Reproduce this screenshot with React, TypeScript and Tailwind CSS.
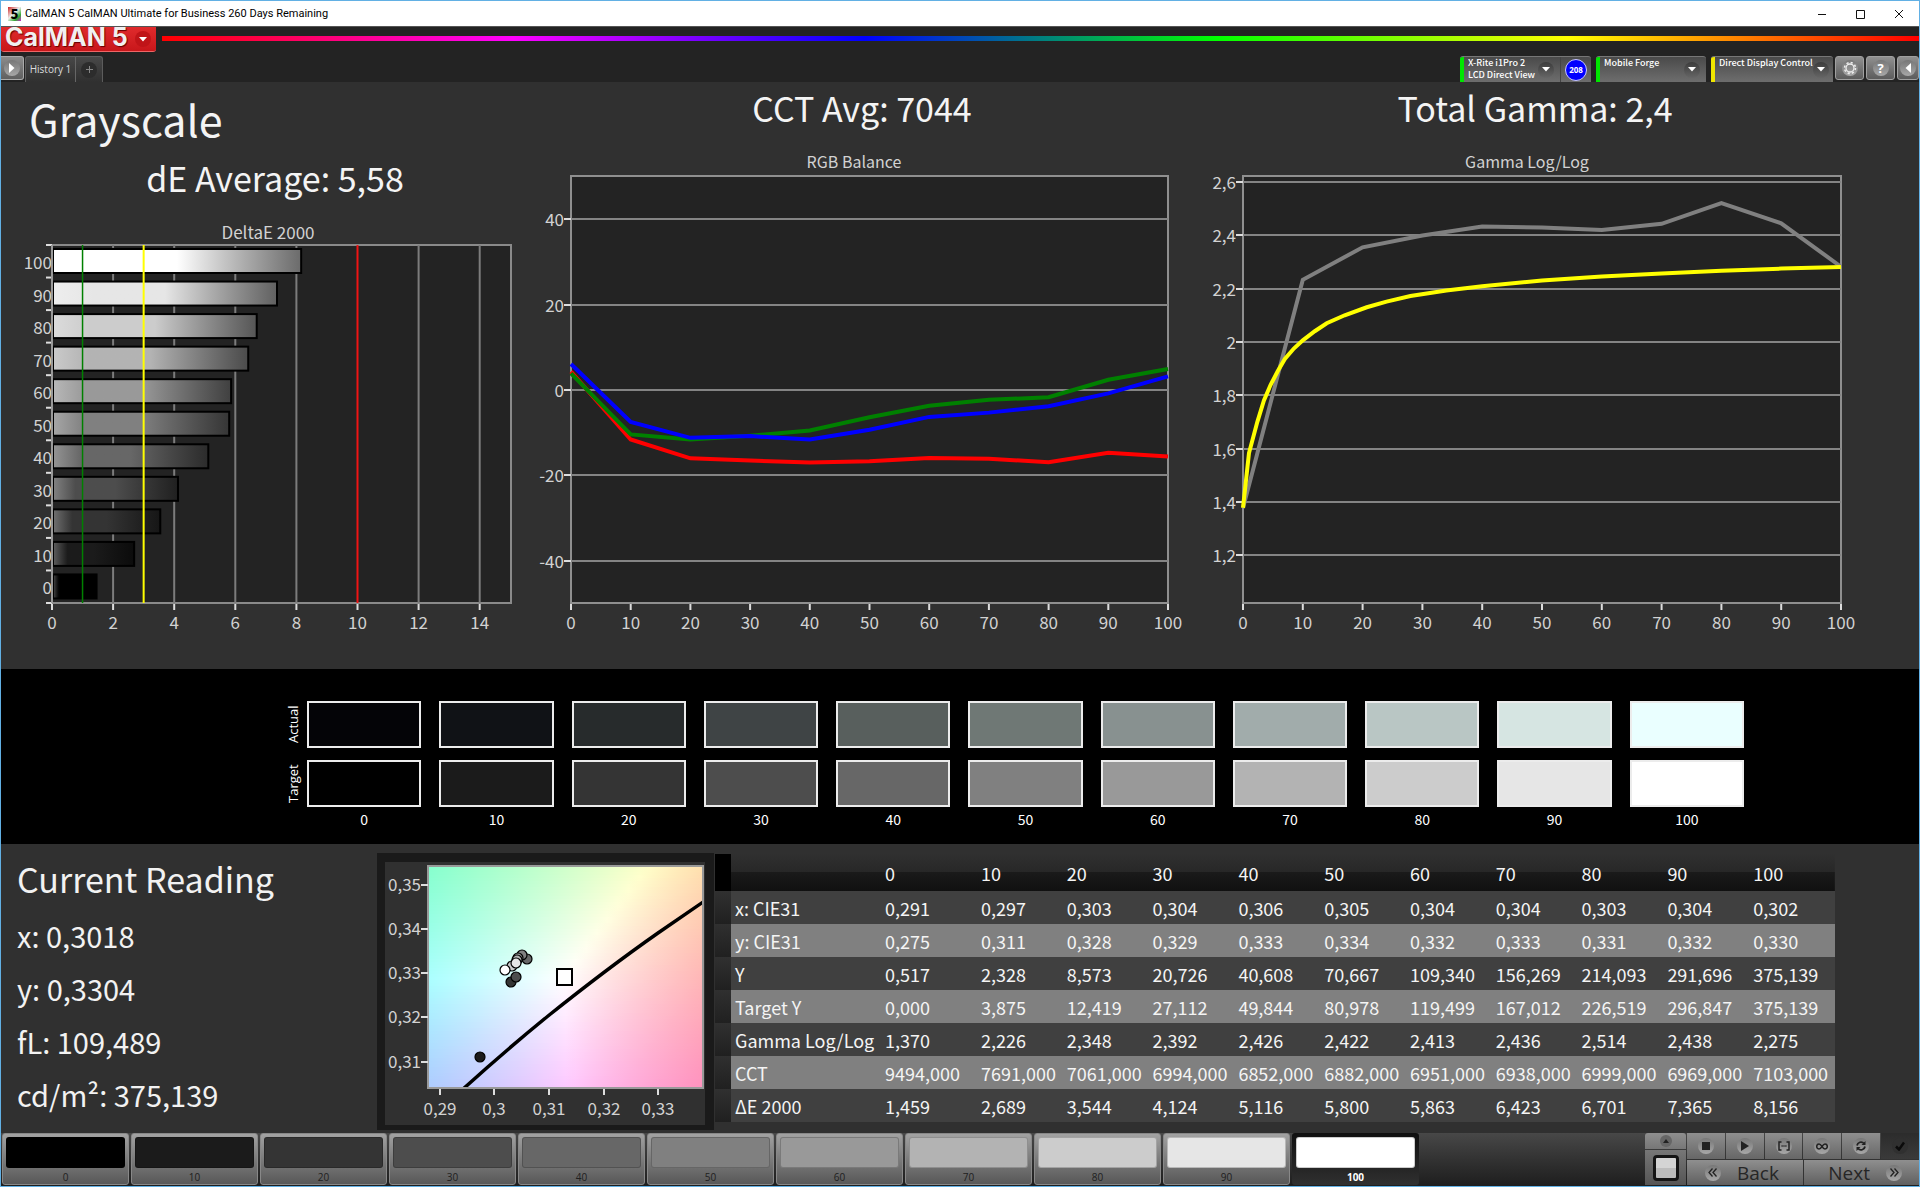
import type { ReactNode } from 'react'

// ── Measurement data ─────────────────────────────
const LEVELS = [0, 10, 20, 30, 40, 50, 60, 70, 80, 90, 100]

const TARGET = ['#000000', '#1b1b1b', '#343434', '#4d4d4d', '#676767', '#808080', '#999999', '#b3b3b3', '#cccccc', '#e6e6e6', '#ffffff']
const ACTUAL = ['#040407', '#101216', '#272b2c', '#3f4445', '#585f5d', '#6f7875', '#889190', '#a1acab', '#b9c6c4', '#d6e5e2', '#eaffff']

const DELTA_E = [1.459, 2.689, 3.544, 4.124, 5.116, 5.8, 5.863, 6.423, 6.701, 7.365, 8.156]

const RED = [4.3, -11.6, -16, -16.5, -17, -16.7, -15.9, -16.1, -16.9, -14.7, -15.6]
const GREEN = [3.9, -10.4, -11.6, -10.7, -9.5, -6.4, -3.7, -2.3, -1.7, 2.4, 4.9]
const BLUE = [6.1, -7.5, -11.2, -10.8, -11.6, -9.3, -6.3, -5.3, -3.8, -0.8, 3.2]

const GAMMA = [1.377, 2.233, 2.355, 2.399, 2.433, 2.429, 2.42, 2.443, 2.521, 2.445, 2.282]
const GAMMA_TARGET = [
  [0, 1.378], [1, 1.583], [2.4, 1.7], [3.5, 1.78], [4.6, 1.838], [5.8, 1.89], [7, 1.936], [8.5, 1.975], [10, 2.006],
  [12, 2.04], [14, 2.07], [17, 2.1], [20.7, 2.13], [24, 2.151], [28, 2.172], [34, 2.193], [40, 2.209],
  [50, 2.23], [60, 2.245], [70, 2.257], [80, 2.267], [90, 2.275], [100, 2.281],
]

const ROWS = [
  { label: 'x: CIE31', values: ['0,291', '0,297', '0,303', '0,304', '0,306', '0,305', '0,304', '0,304', '0,303', '0,304', '0,302'] },
  { label: 'y: CIE31', values: ['0,275', '0,311', '0,328', '0,329', '0,333', '0,334', '0,332', '0,333', '0,331', '0,332', '0,330'] },
  { label: 'Y', values: ['0,517', '2,328', '8,573', '20,726', '40,608', '70,667', '109,340', '156,269', '214,093', '291,696', '375,139'] },
  { label: 'Target Y', values: ['0,000', '3,875', '12,419', '27,112', '49,844', '80,978', '119,499', '167,012', '226,519', '296,847', '375,139'] },
  { label: 'Gamma Log/Log', values: ['1,370', '2,226', '2,348', '2,392', '2,426', '2,422', '2,413', '2,436', '2,514', '2,438', '2,275'] },
  { label: 'CCT', values: ['9494,000', '7691,000', '7061,000', '6994,000', '6852,000', '6882,000', '6951,000', '6938,000', '6999,000', '6969,000', '7103,000'] },
  { label: 'ΔE 2000', values: ['1,459', '2,689', '3,544', '4,124', '5,116', '5,800', '5,863', '6,423', '6,701', '7,365', '8,156'] },
]

const AXIS_TEXT = 'fill-[#d2d2d2] text-[17px]'

// ── Window title bar ─────────────────────────────
function TitleBar() {
  return (
    <header className="flex h-[25px] items-center bg-white text-black">
      <span className="ml-[7px] flex h-[14px] w-[13px] items-center justify-center bg-[linear-gradient(135deg,#c22,#eee_45%,#3a3_75%,#c2c)] text-[13px] leading-none font-black">
        5
      </span>
      <h1 className="ml-1 font-[Roboto,sans-serif] text-[11px] leading-4">CalMAN 5 CalMAN Ultimate for Business 260 Days Remaining</h1>
      <div className="ml-auto flex h-full">
        <button aria-label="Minimize" className="flex w-[38px] items-center justify-center">
          <svg width="10" height="10" stroke="#111"><path d="M1 5.5h8" /></svg>
        </button>
        <button aria-label="Maximize" className="flex w-[38px] items-center justify-center">
          <svg width="10" height="10" fill="none" stroke="#111"><path d="M1.500 1.500h8v8h-8z" /></svg>
        </button>
        <button aria-label="Close" className="flex w-[40px] items-center justify-center">
          <svg width="10" height="10" stroke="#111"><path d="M1 1l8 8M9 1l-8 8" /></svg>
        </button>
      </div>
    </header>
  )
}

function Knob({ dark, children }: { dark?: boolean; children: ReactNode }) {
  return (
    <span
      className={
        dark
          ? 'flex size-4 shrink-0 items-center justify-center rounded-full bg-gradient-to-b from-[#3c3c3c] to-[#666]'
          : 'flex size-4 shrink-0 items-center justify-center rounded-full bg-gradient-to-b from-[#777] to-[#a8a8a8]'
      }
    >
      {children}
    </span>
  )
}

function Caret() {
  return <svg width="8" height="5" fill="#fff"><path d="M0 0h8L4 4.500z" /></svg>
}

function DeviceTab({ stripe, width, lines, badge }: { stripe: string; width: string; lines: string[]; badge?: string }) {
  return (
    <div className={`flex h-[26px] overflow-hidden rounded-t-[3px] border-t border-[#777] bg-gradient-to-b from-[#4a4a4a] to-[#6e6e6e] ${width}`}>
      <span className={`w-1 shrink-0 ${stripe}`} />
      <button className="flex min-w-0 flex-1 items-center justify-between pr-[6px] pl-1 text-left">
        <span className="self-start font-['Noto_Sans_CJK_SC',sans-serif] text-[9px] leading-3 font-medium whitespace-nowrap text-white">
          {lines.map((line) => <span key={line} className="block">{line}</span>)}
        </span>
        <Knob dark><Caret /></Knob>
      </button>
      {badge && (
        <span className="flex w-[31px] shrink-0 items-center justify-center border-l border-[#444]">
          <span className="flex size-[22px] items-center justify-center rounded-full border border-[#c8c8ff] bg-[#0000ff] text-[8px] font-bold text-white">
            {badge}
          </span>
        </span>
      )}
    </div>
  )
}

const SQUARE_BUTTON = 'flex h-6 items-center justify-center rounded-[3px] border border-[#a0a0a0] bg-gradient-to-b from-[#909090] to-[#5c5c5c]'

function Toolbar() {
  return (
    <div className="border-t border-[#555] bg-[#232323] font-['Open_Sans',sans-serif]">
      <div className="flex h-[25px]">
        <button className="flex w-[155px] items-start rounded-b-[3px] border-b border-[#e66] bg-gradient-to-b from-[#e02a2c] to-[#c8161a] pl-1 text-left">
          <span className="font-[Inter,sans-serif] text-[25px] leading-5 font-bold whitespace-nowrap text-[#f0f0f0] [text-shadow:1px_1px_1px_#600]">CalMAN 5</span>
          <span className="mt-1 mr-[5px] ml-auto flex size-4 items-center justify-center rounded-full bg-[#c01418]"><Caret /></span>
        </button>
        <div className="mt-[9px] ml-[6px] h-[5px] flex-1 bg-[linear-gradient(90deg,#f00,#f0f_20%,#00f_40%,#0f0_60%,#ff0_80%,#f00)]" />
      </div>
      <div className="flex h-[30px] items-end">
        <button aria-label="Play" className="mb-[2px] flex h-6 w-[23px] items-center justify-center rounded-r-[3px] border border-l-0 border-[#aaa] bg-gradient-to-b from-[#8c8c8c] to-[#606060]">
          <Knob><svg width="6" height="10" fill="#fff"><path d="M0 0v10l5.500-5z" /></svg></Knob>
        </button>
        <div className="ml-px flex h-[26px] rounded-t-[3px] border border-b-0 border-[#5c5c5c] bg-gradient-to-b from-[#484848] to-[#303030]">
          <button className="w-[49px] text-[10px] text-[#ddd]">History 1</button>
          <button aria-label="Add tab" className="flex w-[27px] items-center justify-center border-l border-[#666]">
            <span className="flex size-4 items-center justify-center rounded-full bg-[#2c2c2c]">
              <svg width="7" height="7" stroke="#888"><path d="M3.500 0v7M0 3.500h7" /></svg>
            </span>
          </button>
        </div>
        <div className="ml-auto flex items-end">
          <DeviceTab stripe="bg-[#00e600]" width="w-[131px]" lines={['X-Rite i1Pro 2', 'LCD Direct View']} badge="208" />
          <div className="w-[5px]" />
          <DeviceTab stripe="bg-[#00e600]" width="w-[110px]" lines={['Mobile Forge']} />
          <div className="w-[5px]" />
          <DeviceTab stripe="bg-[#f0e600]" width="w-[122px]" lines={['Direct Display Control']} />
          <div className="mb-[2px] ml-[2px] flex gap-[2px]">
            <button aria-label="Settings" className={`w-[29px] ${SQUARE_BUTTON}`}>
              <Knob>
                <svg width="14" height="14" viewBox="-7 -7 14 14" fill="none" stroke="#eee">
                  <circle r="4" strokeWidth="1.300" />
                  <circle r="5.500" strokeWidth="1.500" strokeDasharray="2.160 2.160" />
                </svg>
              </Knob>
            </button>
            <button aria-label="Help" className={`w-[29px] ${SQUARE_BUTTON}`}>
              <Knob><span className="text-[13px] leading-none font-bold text-white">?</span></Knob>
            </button>
            <button aria-label="Collapse" className={`w-[22px] ${SQUARE_BUTTON}`}>
              <Knob><svg width="6" height="10" fill="#fff"><path d="M6 0v10L0.500 5z" /></svg></Knob>
            </button>
          </div>
        </div>
      </div>
    </div>
  )
}

// ── DeltaE bar chart ─────────────────────────────
function DeltaEChart() {
  const left = 52
  const top = 245
  const bottom = 603
  const unit = 30.55
  const step = (bottom - top) / 11
  const x = (v: number) => left + v * unit
  return (
    <svg viewBox="1 220 532 449" className="block w-full" role="img" aria-label="DeltaE 2000">
      <defs>
        {TARGET.map((c, i) => (
          <linearGradient key={i} id={`bar${i}`}>
            <stop offset="0" stopColor={`color-mix(in srgb, ${c} 70%, #fff)`} />
            <stop offset="0.180" stopColor={c} />
            <stop offset="0.500" stopColor={c} />
            <stop offset="1" stopColor={`color-mix(in srgb, ${c} 42%, #000)`} />
          </linearGradient>
        ))}
      </defs>
      <text x="268" y="239" textAnchor="middle" className={AXIS_TEXT}>DeltaE 2000</text>
      <rect x={left} y={top} width="459" height={bottom - top} fill="#232323" stroke="#8a8a8a" strokeWidth="2" />
      {[2, 4, 6, 8, 12, 14].map((v) => (
        <path key={v} d={`M${x(v)} ${top}V${bottom}`} stroke="#7c7c7c" strokeWidth="2" />
      ))}
      {[0, 2, 4, 6, 8, 10, 12, 14].map((v) => (
        <g key={v}>
          <path d={`M${x(v)} ${bottom + 1}v6`} stroke="#ddd" strokeWidth="2" />
          <text x={x(v)} y="629" textAnchor="middle" className={AXIS_TEXT}>{v}</text>
        </g>
      ))}
      {LEVELS.map((level, i) => {
        const y = top + step * (10 - i)
        return (
          <g key={level}>
            <path d={`M46 ${y}h6`} stroke="#ddd" strokeWidth="2" />
            <rect x={left + 1} y={y + 4} width={DELTA_E[i] * unit - 1} height="24" fill={`url(#bar${i})`} stroke="#000" strokeWidth="2" />
            <text x="52" y={y + 24} textAnchor="end" className={AXIS_TEXT}>{level}</text>
          </g>
        )
      })}
      <path d="M46 603h6" stroke="#ddd" strokeWidth="2" />
      <path d={`M${left} ${top}V${bottom}`} stroke="#999" strokeWidth="2" />
      <path d={`M${x(1)} ${top}V${bottom}`} stroke="#008000" strokeWidth="1.500" />
      <path d={`M${x(3)} ${top}V${bottom}`} stroke="#ffff00" strokeWidth="2" />
      <path d={`M${x(10)} ${top}V${bottom}`} stroke="#f01414" strokeWidth="2" />
    </svg>
  )
}

// ── Line charts share the same frame ─────────────
interface LineChartProps {
  title: string
  titleX: number
  viewBox: string
  left: number
  right: number
  ticks: { label: string; y: number }[]
  children: ReactNode
}

function LineChart({ title, titleX, viewBox, left, right, ticks, children }: LineChartProps) {
  return (
    <svg viewBox={viewBox} className="block w-full" role="img" aria-label={title}>
      <text x={titleX} y="168" textAnchor="middle" className="fill-[#d2d2d2] text-[16px]">{title}</text>
      <rect x={left} y="176" width={right - left} height="427" fill="#232323" stroke="#8f8f8f" strokeWidth="2" />
      {ticks.map(({ label, y }) => (
        <g key={label}>
          <path d={`M${left} ${y}H${right}`} stroke="#848484" strokeWidth="2" />
          <path d={`M${left - 7} ${y}h7`} stroke="#ddd" strokeWidth="2" />
          <text x={left - 7} y={y + 7} textAnchor="end" className={AXIS_TEXT}>{label}</text>
        </g>
      ))}
      {LEVELS.map((level) => {
        const x = left + ((right - left) * level) / 100
        return (
          <g key={level}>
            <path d={`M${x} 604v6`} stroke="#ddd" strokeWidth="2" />
            <text x={x} y="629" textAnchor="middle" className={AXIS_TEXT}>{level}</text>
          </g>
        )
      })}
      {children}
    </svg>
  )
}

function RgbBalance() {
  const points = (values: number[]) => values.map((v, i) => `${571 + i * 59.7},${390 - v * 4.27}`).join(' ')
  const ticks = [40, 20, 0, -20, -40].map((v) => ({ label: String(v), y: Math.round(390 - v * 4.27) }))
  return (
    <LineChart title="RGB Balance" titleX={854} viewBox="533 140 658 529" left={571} right={1168} ticks={ticks}>
      <g fill="none" strokeWidth="4">
        <polyline points={points(RED)} stroke="#ff0000" />
        <polyline points={points(GREEN)} stroke="#008000" />
        <polyline points={points(BLUE)} stroke="#0000ff" />
      </g>
    </LineChart>
  )
}

function GammaChart() {
  const px = (level: number, v: number) => `${1243 + level * 5.98},${182 + (2.6 - v) * 266.5}`
  const ticks = ['2,6', '2,4', '2,2', '2', '1,8', '1,6', '1,4', '1,2'].map((label, i) => ({ label, y: Math.round(182 + i * 53.3) }))
  return (
    <LineChart title="Gamma Log/Log" titleX={1527} viewBox="1191 140 728 529" left={1243} right={1841} ticks={ticks}>
      <g fill="none" strokeWidth="4">
        <polyline points={GAMMA.map((v, i) => px(i * 10, v)).join(' ')} stroke="#808080" />
        <polyline points={GAMMA_TARGET.map(([level, v]) => px(level, v)).join(' ')} stroke="#ffff00" />
      </g>
    </LineChart>
  )
}

// ── Chromaticity diagram ─────────────────────────
const CIE_LEFT = 429
const CIE_WIDTH = 273
const cieX = (x: number) => 439.5 + (x - 0.29) * 5470
const cieY = (y: number) => 884.5 + (0.35 - y) * 4430

// xy → linear sRGB, scaled so the brightest channel is full
function xyToColor(px: number, py: number) {
  const x = 0.29 + (px - 439.5) / 5470
  const y = 0.35 - (py - 884.5) / 4430
  const X = x / y
  const Z = (1 - x - y) / y
  const rgb = [3.2406 * X - 1.5372 - 0.4986 * Z, -0.9689 * X + 1.8758 + 0.0415 * Z, 0.0557 * X - 0.204 + 1.057 * Z]
  const max = Math.max(...rgb)
  return `rgb(${rgb.map((c) => Math.round((c / max) * 255)).join(',')})`
}

const CIE_BANDS = Array.from({ length: 74 }, (_, i) => 866 + i * 3)
const CIE_STOPS = Array.from({ length: 27 }, (_, i) => i / 26)

const DOTS: [number, number, string][] = [
  [480, 1057, '#1b1b1b'], [511, 982, '#343434'], [516, 977, '#4d4d4d'], [527, 959, '#676767'], [522, 955, '#808080'],
  [518, 958, '#999999'], [517, 960, '#b3b3b3'], [512, 966, '#cccccc'], [516, 963, '#e6e6e6'], [505, 970, '#ffffff'],
]

function CieChart() {
  return (
    <svg viewBox="377 853 337 277" className="block w-full" role="img" aria-label="CIE chromaticity">
      <defs>
        {CIE_BANDS.map((y) => (
          <linearGradient key={y} id={`cie${y}`}>
            {CIE_STOPS.map((s) => <stop key={s} offset={s} stopColor={xyToColor(CIE_LEFT + s * CIE_WIDTH, y + 1.5)} />)}
          </linearGradient>
        ))}
        <clipPath id="ciePlot"><rect x={CIE_LEFT} y="866" width={CIE_WIDTH} height="221" /></clipPath>
      </defs>
      <rect x="377" y="853" width="337" height="277" fill="#1a1a1a" />
      <rect x="385" y="862" width="320" height="263" fill="#303030" />
      <g clipPath="url(#ciePlot)">
        {CIE_BANDS.map((y) => (
          <rect key={y} x={CIE_LEFT} y={y} width={CIE_WIDTH} height="3" fill={`url(#cie${y})`} shapeRendering="crispEdges" />
        ))}
        <path d="M462 1090C495 1060 521 1038 548 1016C583 988 618 961 658 933L706 900" fill="none" stroke="#000" strokeWidth="3.500" />
      </g>
      <rect x="428" y="866" width="275" height="222" fill="none" stroke="#999" strokeWidth="2" />
      {['0,35', '0,34', '0,33', '0,32', '0,31'].map((label, i) => {
        const y = Math.round(cieY(0.35 - i * 0.01))
        return (
          <g key={label}>
            <path d={`M421 ${y}h7`} stroke="#ddd" strokeWidth="2" />
            <text x="421" y={y + 6} textAnchor="end" className={AXIS_TEXT}>{label}</text>
          </g>
        )
      })}
      {['0,29', '0,3', '0,31', '0,32', '0,33'].map((label, i) => {
        const x = Math.round(cieX(0.29 + i * 0.01))
        return (
          <g key={label}>
            <path d={`M${x} 1089v6`} stroke="#ddd" strokeWidth="2" />
            <text x={x} y="1115" textAnchor="middle" className={AXIS_TEXT}>{label}</text>
          </g>
        )
      })}
      {DOTS.map(([x, y, fill]) => (
        <circle key={fill} cx={x} cy={y} r="5" fill={fill} stroke="#000" strokeWidth="1.200" />
      ))}
      <rect x="557" y="969" width="15" height="16" fill="#fff" stroke="#000" strokeWidth="2" />
    </svg>
  )
}

// ── Swatches ─────────────────────────────────────
function SwatchRow({ label, colors }: { label: string; colors: string[] }) {
  return (
    <div className="flex">
      <div className="mr-2 flex h-[47px] w-3 rotate-180 items-center justify-center font-['Open_Sans',sans-serif] text-[13px] leading-3 font-medium [writing-mode:vertical-rl]">
        {label}
      </div>
      <div className="grid flex-1 grid-cols-11 gap-[18px]">
        {colors.map((color) => (
          <div key={color} className="h-[47px] border-2 border-[#ececec]" style={{ backgroundColor: color }} />
        ))}
      </div>
    </div>
  )
}

function Swatches() {
  return (
    <section className="flex h-[175px] flex-col gap-3 bg-black pt-8 pr-[175px] pl-[286px] text-white">
      <SwatchRow label="Actual" colors={ACTUAL} />
      <SwatchRow label="Target" colors={TARGET} />
      <div className="-mt-[10px] ml-5 grid grid-cols-11 gap-[18px] text-center text-[14px] leading-5">
        {LEVELS.map((level) => <span key={level}>{level}</span>)}
      </div>
    </section>
  )
}

// ── Current reading + table ──────────────────────
function CurrentReading() {
  return (
    <div className="pt-[9px] pl-4 text-[#f2f2f2]">
      <h2 className="text-[34px] leading-[52px]">Current Reading</h2>
      <div className="mt-1 text-[29px] leading-[53px]">
        <p>x: 0,3018</p>
        <p>y: 0,3304</p>
        <p>fL: 109,489</p>
        <p>cd/m²: 375,139</p>
      </div>
    </div>
  )
}

function ReadingsTable() {
  return (
    <table className="mt-[10px] w-full table-fixed text-left text-[18px] leading-6 text-[#f4f4f4]">
      <colgroup>
        <col className="w-4" />
        <col className="w-[150px]" />
        <col className="w-24" />
        {LEVELS.slice(1).map((level) => <col key={level} />)}
      </colgroup>
      <thead>
        <tr className="h-[37px] bg-[linear-gradient(#303030,#272727_50%,#1a1a1a_50%,#101010)]">
          <td className="bg-black" />
          <td />
          {LEVELS.map((level) => <th key={level} scope="col" className="px-1 py-0 font-normal">{level}</th>)}
        </tr>
      </thead>
      <tbody>
        {ROWS.map((row, i) => (
          <tr key={row.label} className={i % 2 ? 'h-[33px] bg-[#808080]' : 'h-[33px] bg-[#404040]'}>
            <td className="bg-gradient-to-b from-[#303030] to-[#202020]" />
            <th scope="row" className="px-1 py-0 font-normal whitespace-nowrap">{row.label}</th>
            {row.values.map((value, j) => <td key={j} className="px-1 py-0">{value}</td>)}
          </tr>
        ))}
      </tbody>
    </table>
  )
}

// ── Bottom bar ───────────────────────────────────
const TOOL = 'flex flex-1 items-center justify-center bg-gradient-to-b from-[#8f8f8f] to-[#676767]'

function BottomBar() {
  return (
    <footer className="flex h-[53px] items-start bg-gradient-to-b from-[#484848] to-[#1e1e1e] pl-px font-['Open_Sans',sans-serif]">
      <div className="flex gap-[2px]">
        {LEVELS.map((level, i) => {
          const active = level === 100
          return (
            <button
              key={level}
              className={
                active
                  ? 'flex h-[52px] w-[127px] flex-col items-center rounded-[3px] bg-gradient-to-b from-[#101010] to-[#303030] p-1 text-[10px] leading-4 font-bold text-white'
                  : 'flex h-[52px] w-[127px] flex-col items-center rounded-[3px] border border-[#888] bg-gradient-to-b from-[#a2a2a2] to-[#585858] p-[3px] text-[10px] leading-4 text-[#202020]'
              }
            >
              <span
                className="mb-px h-[31px] w-full shrink-0 rounded-[3px] border border-black/20"
                style={{ backgroundColor: TARGET[i] }}
              />
              {level}
            </button>
          )
        })}
      </div>
      <div className="ml-auto flex h-[52px] gap-px">
        <div className="flex w-[41px] flex-col gap-px">
          <button aria-label="Expand" className="flex h-4 items-center justify-center rounded-t-[3px] bg-gradient-to-b from-[#8f8f8f] to-[#777]">
            <span className="flex size-3 items-center justify-center rounded-full bg-[#666]">
              <svg width="6" height="4" fill="#222"><path d="M0 4h6L3 0z" /></svg>
            </span>
          </button>
          <button aria-label="Pattern window" className="flex flex-1 items-center justify-center bg-gradient-to-b from-[#777] to-[#555]">
            <span className="size-[26px] rounded-[4px] border-3 border-[#151515] bg-[linear-gradient(#d4d4d4_50%,#bcbcbc_50%)]" />
          </button>
        </div>
        <div className="flex w-[232px] flex-col gap-px">
          <div className="flex h-[26px] gap-px">
            <button aria-label="Stop" className={TOOL}><Knob><svg width="8" height="8" fill="#222"><path d="M0 0h8v8H0z" /></svg></Knob></button>
            <button aria-label="Read" className={TOOL}><Knob><svg width="8" height="10" fill="#222"><path d="M0 0v10l8-5z" /></svg></Knob></button>
            <button aria-label="Read series" className={TOOL}>
              <Knob>
                <svg width="12" height="10" fill="none" stroke="#222" strokeWidth="1.500">
                  <path d="M3.500 1H1v8h2.500M8.500 1H11v8H8.500" />
                  <path d="M3.500 5h5" strokeDasharray="1.200 0.700" />
                </svg>
              </Knob>
            </button>
            <button aria-label="Read continuous" className={TOOL}>
              <Knob>
                <svg width="12" height="7" fill="none" stroke="#222" strokeWidth="1.500">
                  <path d="M6 3.500C4.800 1.700 4 1 3 1a2.300 2.500 0 0 0 0 5c1 0 1.800-.700 3-2.500S8 1 9 1a2.300 2.500 0 0 1 0 5C8 6 7.200 5.300 6 3.500z" />
                </svg>
              </Knob>
            </button>
            <button aria-label="Refresh" className={TOOL}>
              <Knob>
                <svg width="12" height="12" fill="none" stroke="#222" strokeWidth="1.800">
                  <path d="M2 5.500a4 4 0 0 1 7-2M10 6.500a4 4 0 0 1-7 2" />
                  <path d="M10.500 1v4h-4zM1.500 11V7h4z" fill="#222" stroke="none" />
                </svg>
              </Knob>
            </button>
            <button aria-label="Accept" className="flex flex-1 items-center justify-center bg-gradient-to-b from-[#2c2c2c] to-[#3a3a3a]">
              <span className="flex size-4 items-center justify-center rounded-full bg-[#303030]">
                <svg width="10" height="10" fill="none" stroke="#0a0a0a" strokeWidth="2.500"><path d="M1 5.500l3 3L9 1.500" /></svg>
              </span>
            </button>
          </div>
          <div className="flex flex-1 text-[19px] leading-6 font-medium text-[#262626]">
            <button className="flex flex-1 items-center justify-start gap-4 border-r border-[#333] bg-gradient-to-b from-[#8f8f8f] to-[#606060] pl-[18px]">
              <Knob>
                <svg width="10" height="9" fill="none" stroke="#222" strokeWidth="1.300"><path d="M4.500 0.500l-3.500 4 3.500 4M8.500 0.500l-3.500 4 3.500 4" /></svg>
              </Knob>
              Back
            </button>
            <button className="flex flex-1 items-center justify-end gap-4 bg-gradient-to-b from-[#8f8f8f] to-[#606060] pr-[17px]">
              Next
              <Knob>
                <svg width="10" height="9" fill="none" stroke="#222" strokeWidth="1.300"><path d="M1.500 0.500l3.500 4-3.500 4M5.500 0.500l3.500 4-3.500 4" /></svg>
              </Knob>
            </button>
          </div>
        </div>
      </div>
    </footer>
  )
}

export default function App() {
  return (
    <div className="border border-[#62b0e4] bg-[#303030] font-['Noto_Sans_CJK_SC',sans-serif]">
      <TitleBar />
      <Toolbar />
      <main>
        <section className="grid grid-cols-[532fr_658fr_728fr] items-end text-[34px] leading-[44px] text-[#f4f4f4]">
          <div className="pt-1">
            <h2 className="mb-[6px] pl-7 text-[43px] leading-[64px]">Grayscale</h2>
            <p className="pb-5 pl-4 text-center">dE Average: 5,58</p>
            <DeltaEChart />
          </div>
          <div>
            <p className="pb-[10px] text-center">CCT Avg: 7044</p>
            <RgbBalance />
          </div>
          <div>
            <p className="pr-10 pb-[10px] text-center">Total Gamma: 2,4</p>
            <GammaChart />
          </div>
        </section>
        <Swatches />
        <section className="grid h-[289px] grid-cols-[375fr_337fr_1204fr] items-start gap-x-px">
          <CurrentReading />
          <div className="pt-[9px]"><CieChart /></div>
          <div className="pr-[84px]"><ReadingsTable /></div>
        </section>
      </main>
      <BottomBar />
    </div>
  )
}
